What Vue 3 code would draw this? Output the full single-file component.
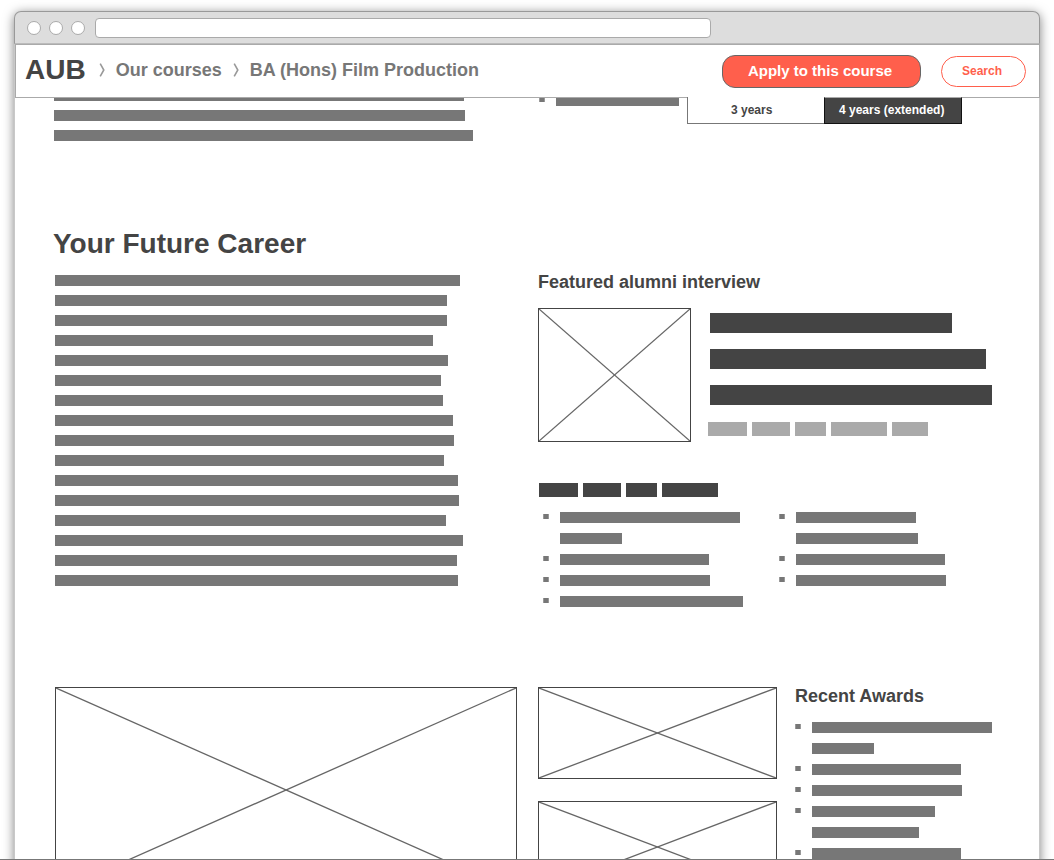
<script setup>
import { ref } from 'vue'

const address = ref('')
const duration = ref('3')

const introLines = [410, 411, 419]
const careerLines = [405, 392, 392, 378, 393, 386, 388, 398, 399, 389, 403, 404, 391, 408, 402, 403]
const interviewLines = [242, 276, 282]
const interviewTags = [39, 38, 31, 56, 36]
const skillTags = [39, 38, 31, 56]
const introItems = [[123]]
const skillColumns = [
  [[180, 62], [149], [150], [183]],
  [[120, 122], [149], [150]],
]
const awardItems = [[180, 62], [149], [150], [123, 107], [149], [150]]
</script>

<template>
  <div class="stage">
    <div class="window">
      <div class="titlebar">
        <button v-for="name in ['Close', 'Minimise', 'Zoom']" :key="name" type="button" class="dot" :aria-label="name"></button>
        <input v-model="address" class="address" type="text" aria-label="Address" />
      </div>

      <header class="header">
        <nav class="crumbs" aria-label="Breadcrumb">
          <a href="#" class="brand">AUB</a>
          <svg class="chevron" viewBox="0 0 7 14" aria-hidden="true"><path d="M1.2 .7 L4.8 7 L1.2 13.3" /></svg>
          <a href="#courses">Our courses</a>
          <svg class="chevron" viewBox="0 0 7 14" aria-hidden="true"><path d="M1.2 .7 L4.8 7 L1.2 13.3" /></svg>
          <a href="#film">BA (Hons) Film Production</a>
        </nav>
        <button type="button" class="apply">Apply to this course</button>
        <button type="button" class="search">Search</button>
      </header>

      <main class="content">
        <section class="columns intro">
          <div class="copy intro-copy">
            <div v-for="(w, i) in introLines" :key="i" class="bar" :style="{ width: w + 'px' }"></div>
          </div>
          <div class="intro-side">
            <ul class="list">
              <li v-for="(item, i) in introItems" :key="i">
                <div v-for="(w, j) in item" :key="j" class="bar" :style="{ width: w + 'px' }"></div>
              </li>
            </ul>
            <div class="tabs">
              <button type="button" class="tab tab-short" :aria-pressed="duration === '3'" @click="duration = '3'">3 years</button>
              <button type="button" class="tab tab-extended" :aria-pressed="duration === '4'" @click="duration = '4'">4 years (extended)</button>
            </div>
          </div>
        </section>

        <section class="career">
          <h2>Your Future Career</h2>
          <div class="columns">
            <div class="copy career-copy">
              <div v-for="(w, i) in careerLines" :key="i" class="bar" :style="{ width: w + 'px' }"></div>
            </div>
            <div class="alumni">
              <h3>Featured alumni interview</h3>
              <div class="interview">
                <svg class="picture portrait" aria-hidden="true">
                  <line x1="0" y1="0" x2="100%" y2="100%" /><line x1="100%" y1="0" x2="0" y2="100%" />
                </svg>
                <div class="quote">
                  <div v-for="(w, i) in interviewLines" :key="i" class="quote-bar" :style="{ width: w + 'px' }"></div>
                  <div class="tags light">
                    <span v-for="(w, i) in interviewTags" :key="i" :style="{ width: w + 'px' }"></span>
                  </div>
                </div>
              </div>
              <div class="tags dark">
                <span v-for="(w, i) in skillTags" :key="i" :style="{ width: w + 'px' }"></span>
              </div>
              <div class="skills">
                <ul v-for="(column, c) in skillColumns" :key="c" class="list">
                  <li v-for="(item, i) in column" :key="i">
                    <div v-for="(w, j) in item" :key="j" class="bar" :style="{ width: w + 'px' }"></div>
                  </li>
                </ul>
              </div>
            </div>
          </div>
        </section>

        <section class="columns gallery">
          <div class="feature">
            <svg class="picture large" aria-hidden="true">
              <line x1="0" y1="0" x2="100%" y2="100%" /><line x1="100%" y1="0" x2="0" y2="100%" />
            </svg>
          </div>
          <div class="gallery-side">
            <div class="thumbs">
              <svg v-for="n in 2" :key="n" class="picture thumb" aria-hidden="true">
                <line x1="0" y1="0" x2="100%" y2="100%" /><line x1="100%" y1="0" x2="0" y2="100%" />
              </svg>
            </div>
            <div class="awards">
              <h3>Recent Awards</h3>
              <ul class="list">
                <li v-for="(item, i) in awardItems" :key="i">
                  <div v-for="(w, j) in item" :key="j" class="bar" :style="{ width: w + 'px' }"></div>
                </li>
              </ul>
            </div>
          </div>
        </section>
      </main>
    </div>
  </div>
</template>

<style>
body {
  background: #fff;
}
</style>

<style scoped>
.stage {
  box-sizing: border-box;
  height: 100vh;
  overflow: hidden;
  padding: 11px 14px 0;
  border-bottom: 1px solid #777;
  font-family: "Liberation Sans", Arial, sans-serif;
  font-weight: bold;
  color: #444;
}
.stage *,
.stage *::before {
  box-sizing: border-box;
}
.window {
  background: #fff;
  border: solid #c8c8c8;
  border-width: 0 1px;
  border-radius: 7px 7px 0 0;
  box-shadow: 0 2px 11px rgba(0, 0, 0, 0.5);
}
button,
input {
  margin: 0;
  padding: 0;
  font: inherit;
}
h2,
h3,
ul {
  margin: 0;
  padding: 0;
}

/* Browser chrome */
.titlebar {
  display: flex;
  align-items: center;
  gap: 8px;
  height: 33px;
  margin: 0 -1px;
  padding: 0 12px;
  background: #ddd;
  border: 1px solid #999;
  border-bottom-color: #bbb;
  border-radius: 7px 7px 0 0;
}
.dot {
  width: 14px;
  height: 14px;
  background: #fff;
  border: 1px solid #aaa;
  border-radius: 50%;
}
.address {
  flex: 0 1 616px;
  min-width: 0;
  height: 20px;
  margin-left: 2px;
  padding: 0 6px;
  background: #fff;
  border: 1px solid #aaa;
  border-radius: 4px;
  font-size: 12px;
}

/* Sticky course header */
.header {
  position: relative;
  z-index: 1;
  display: flex;
  align-items: center;
  height: 54px;
  margin-right: -1px;
  padding: 0 13px 0 9px;
  background: #fff;
  border: 1px solid #aaa;
}
.crumbs {
  display: flex;
  align-items: center;
  flex: 1;
  padding-bottom: 2px;
  font-size: 18px;
  line-height: 20px;
  white-space: nowrap;
}
.crumbs a {
  color: #777;
  text-decoration: none;
}
.crumbs .brand {
  margin-right: 2px;
  font-size: 28px;
  line-height: 32px;
  color: #444;
}
.chevron {
  width: 7px;
  height: 14px;
  margin: 0 10px 0 11px;
}
.chevron path {
  fill: none;
  stroke: #999;
  stroke-width: 1.6;
}
.apply {
  width: 199px;
  height: 33px;
  margin-right: 20px;
  padding: 0 3px 2px 0;
  background: #ff5f4c;
  border: 1px solid #666;
  border-radius: 13px;
  font-size: 15px;
  color: #fff;
}
.search {
  width: 85px;
  height: 31px;
  padding-right: 3px;
  background: #fff;
  border: 1px solid #ff5f4c;
  border-radius: 16px;
  font-size: 12px;
  color: #ff5f4c;
}

/* Page body */
.content {
  padding: 0 46px 0 38px;
}
.columns {
  display: grid;
  grid-template-columns: 464fr 456fr;
  column-gap: 20px;
}
.copy {
  display: flex;
  flex-direction: column;
  gap: 9px;
}
.bar {
  height: 11px;
  max-width: 100%;
  background: #777;
}
.list {
  display: flex;
  flex-direction: column;
  gap: 10px;
  list-style: none;
}
.list li {
  position: relative;
  display: flex;
  flex-direction: column;
  gap: 10px;
  padding-left: 17px;
}
.list li::before {
  content: "";
  position: absolute;
  top: 2px;
  left: 0;
  width: 6px;
  height: 5px;
  background: #777;
  border: solid #999;
  border-width: 0 1px;
}
h2 {
  font-size: 28px;
  line-height: 32px;
}
h3 {
  padding-left: 1px;
  font-size: 18px;
  line-height: 18px;
  white-space: nowrap;
}

.intro {
  margin-top: -8px;
  padding-bottom: 87px;
}
.intro-copy {
  padding-left: 1px;
}
.intro-side {
  display: flex;
  align-items: flex-start;
  gap: 8px;
  padding: 5px 0 0 2px;
}
.tabs {
  position: relative;
  z-index: 2;
  display: flex;
  margin-top: 2px;
}
.tab {
  height: 27px;
  font-size: 12px;
  line-height: 14px;
  text-align: left;
  white-space: nowrap;
}
.tab-short {
  width: 137px;
  padding-left: 43px;
  background: #fff;
  border: solid #777;
  border-width: 0 0 1px 1px;
  color: #444;
}
.tab-extended {
  width: 138px;
  padding: 0 0 1px 14px;
  background: #444;
  border: 1px solid #111;
  border-top-color: #aaa;
  color: #fff;
}

.career {
  padding-bottom: 80px;
}
.career-copy {
  padding: 15px 0 0 2px;
}
.alumni {
  padding-top: 13px;
}
.interview {
  display: flex;
  gap: 17px;
  margin: 17px 0 41px 1px;
}
.picture {
  display: block;
  flex: none;
  border: 1px solid #444;
}
.picture line {
  stroke: #666;
  stroke-width: 1.3;
}
.portrait {
  width: 153px;
  height: 134px;
}
.quote {
  flex: 1;
  min-width: 0;
  padding-top: 5px;
}
.quote-bar {
  height: 20px;
  margin: 0 0 16px 2px;
  background: #444;
}
.tags {
  display: flex;
  gap: 5px;
}
.tags span {
  height: 14px;
}
.light {
  margin-top: 17px;
}
.light span {
  background: #aaa;
}
.dark {
  margin: 0 0 15px 2px;
}
.dark span {
  background: #444;
}
.skills {
  display: grid;
  grid-template-columns: 219px 1fr;
  column-gap: 17px;
  padding-left: 6px;
}

.feature {
  padding-left: 2px;
}
.large {
  width: 100%;
  height: 206px;
}
.gallery-side {
  display: flex;
  gap: 17px;
  padding-left: 1px;
}
.thumbs {
  display: flex;
  flex-direction: column;
  gap: 22px;
}
.thumb {
  width: 239px;
  height: 92px;
}
.awards {
  flex: 1;
  min-width: 0;
}
.awards .list {
  padding: 17px 0 0 1px;
}
</style>
